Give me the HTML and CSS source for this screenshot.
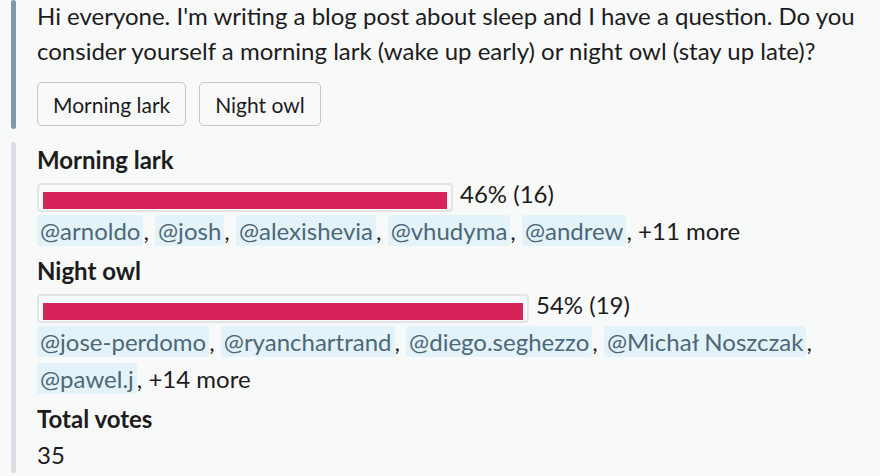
FILE: index.html
```html
<!DOCTYPE html>
<html>
<head>
<meta charset="utf-8">
<link rel="stylesheet" href="styles.css">
</head>
<body>
<div class="poll">
  <section class="block block-question">
    <div class="rail rail-dark"></div>
    <div class="content">
      <p class="question">Hi everyone. I'm writing a blog post about sleep and I have a question. Do you consider yourself a morning lark (wake up early) or night owl (stay up late)?</p>
      <div class="buttons">
        <button class="btn">Morning lark</button>
        <button class="btn">Night owl</button>
      </div>
    </div>
  </section>
  <section class="block block-results">
    <div class="rail rail-light"></div>
    <div class="content">
      <div class="option">
        <div class="option-title">Morning lark</div>
        <div class="bar-row">
          <div class="bar-track" style="width: 416px;"><div class="bar-fill"></div></div>
          <span class="pct">46% (16)</span>
        </div>
        <div class="voters"><span class="mention">@arnoldo</span>, <span class="mention">@josh</span>, <span class="mention">@alexishevia</span>, <span class="mention">@vhudyma</span>, <span class="mention">@andrew</span>, +11 more</div>
      </div>
      <div class="option">
        <div class="option-title">Night owl</div>
        <div class="bar-row">
          <div class="bar-track" style="width: 492px;"><div class="bar-fill"></div></div>
          <span class="pct">54% (19)</span>
        </div>
        <div class="voters"><span class="mention">@jose-perdomo</span>, <span class="mention">@ryanchartrand</span>, <span class="mention">@diego.seghezzo</span>, <span class="mention">@Michał Noszczak</span>,<br><span class="mention">@pawel.j</span>, +14 more</div>
      </div>
      <div class="option">
        <div class="option-title">Total votes</div>
        <div class="total-num">35</div>
      </div>
    </div>
  </section>
</div>
</body>
</html>
```
FILE: styles.css
```css
html, body {
  margin: 0;
  padding: 0;
  background: #f8f9f9;
}
body {
  font-family: Lato, "Noto Sans", sans-serif;
  color: #1d1c1d;
  font-size: 24px;
  width: 880px;
  height: 476px;
  overflow: hidden;
}
.poll {
  display: flex;
  flex-direction: column;
  gap: 13px;
  padding-left: 11px;
}
.block {
  display: flex;
  gap: 21px;
}
.rail {
  width: 5px;
  border-radius: 3px;
  flex: none;
}
.rail-dark { background: #7d99ab; }
.rail-light { background: #dcdce2; }
.content {
  flex: 1;
  min-width: 0;
  display: flex;
  flex-direction: column;
  gap: 4px;
}
.block-question .content {
  gap: 0;
}
.question {
  margin: -2px 0 0;
  line-height: 35px;
}
.buttons {
  display: flex;
  gap: 13px;
  margin-top: 14px;
  padding-bottom: 3px;
}
.btn {
  font-family: inherit;
  font-size: 21px;
  color: #1d1c1d;
  background: #f8f9f9;
  border: 1px solid #c3c7cb;
  border-radius: 5px;
  height: 44px;
  padding: 0 15px;
}
.option-title {
  font-weight: 700;
  line-height: 36px;
}
.bar-row {
  display: flex;
  align-items: flex-start;
  gap: 7px;
  margin-top: 5px;
}
.bar-track {
  height: 29px;
  box-sizing: border-box;
  border: 2px solid #e2e4e6;
  border-radius: 4px;
  padding: 7px 4px 1px 4px;
}
.bar-fill {
  height: 100%;
  background: #d6235a;
}
.pct {
  line-height: 22px;
}
.voters {
  line-height: 37px;
}
.mention {
  background: #e3f3f9;
  color: #4d6878;
  padding: 1px 3px;
  border-radius: 3px;
}
.total-num {
  line-height: 36px;
}
```
